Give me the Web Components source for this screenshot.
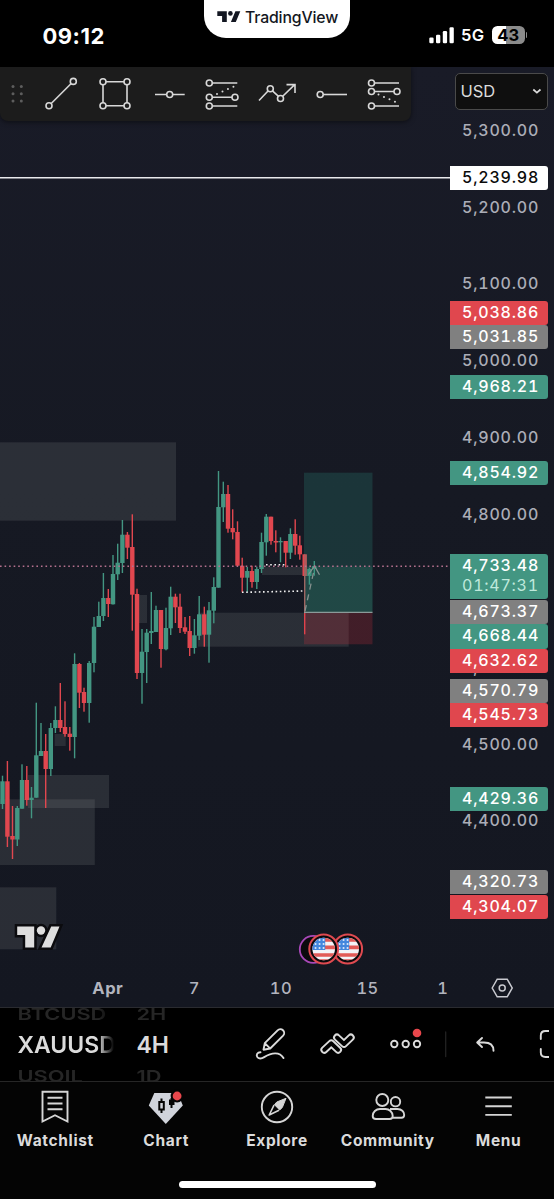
<!DOCTYPE html>
<html lang="en">
<head>
<meta charset="utf-8">
<title>XAUUSD 4H</title>
<style>
  html, body {
    margin: 0;
    background: #000;
  }
  body {
    width: 554px;
    height: 1199px;
    overflow: hidden;
    font-family: Inter, "Liberation Sans", sans-serif;
    color: #dbdbdb;
  }
</style>
</head>
<body>
<trading-app></trading-app>

<script>
function define(name, html, setup) {
  const template = document.createElement('template');
  template.innerHTML = html;
  window.customElements.define(name, class extends HTMLElement {
    constructor() {
      super();
      this.attachShadow({ mode: 'open' });
      this.shadowRoot.appendChild(template.content.cloneNode(true));
    }

    connectedCallback() {
      if (setup) setup(this, this.shadowRoot);
    }
  });
}

define('status-bar', `
<style>
:host {
  display: grid;
  grid-template-columns: 204px 146px 1fr;
  height: 67px;
  background: #000;
  color: #fff;
}
.time {
  padding: 21.5px 0 0 42.5px;
  font-size: 22px;
  font-weight: 700;
  line-height: 28px;
  letter-spacing: .5px;
}
.brand {
  display: flex;
  align-items: center;
  box-sizing: border-box;
  height: 38px;
  padding: 0 0 4px 12px;
  gap: 4px;
  border-radius: 0 0 22px 22px;
  background: #fff;
  color: #131722;
  font-size: 15.8px;
  font-weight: 500;
  letter-spacing: -.15px;
}
.right {
  display: flex;
  align-items: center;
  height: 18px;
  padding: 26px 0 0 79px;
}
.net {
  width: 31px;
  padding-left: 7px;
  font-size: 16.5px;
  font-weight: 600;
  letter-spacing: .4px;
}
.battery {
  width: 32.5px;
  height: 18px;
  border-radius: 5.5px;
  background: linear-gradient(90deg, #fff 14px, #8b8b8b 14px);
  color: #000;
  font-size: 16.5px;
  font-weight: 700;
  line-height: 18px;
  text-align: center;
}
.nub {
  width: 1.5px;
  height: 6px;
  margin-left: 1px;
  border-radius: 0 2px 2px 0;
  background: #8b8b8b;
}
</style>
<div class="time">09:12</div>
<div class="brand">
  <svg width="25" height="14" viewBox="216 11 25 14" fill="#131722">
    <path d="M217.3 12.2h9.5V23h-4.7v-6h-4.8zM235.4 12.2h4.9L235.8 23h-4.9z"/>
    <circle cx="230.4" cy="14.4" r="2.3"/>
  </svg>
  <span>TradingView</span>
</div>
<div class="right">
  <svg width="25" height="18" viewBox="429 26 25 18" fill="#fff">
    <rect x="429.3" y="37.5" width="4.3" height="5.7" rx="1.2"/>
    <rect x="436" y="34.7" width="4.3" height="8.5" rx="1.2"/>
    <rect x="442.8" y="31" width="4.3" height="12.2" rx="1.2"/>
    <rect x="449.5" y="27.2" width="4.3" height="16" rx="1.2"/>
  </svg>
  <span class="net">5G</span>
  <span class="battery">43</span>
  <span class="nub"></span>
</div>
`);

// every tool owns a 54px cell, drawn in the bar's own coordinates
const TOOLS = [
  '<path d="M51.2 103.5L71.2 83.5"/><circle cx="73.3" cy="81.4" r="3"/><circle cx="49" cy="105.7" r="3"/>',
  '<path d="M106 81.7h18M106 105.7h18M103 84.7v18M127 84.7v18"/><circle cx="103" cy="81.7" r="3"/><circle cx="127" cy="81.7" r="3"/><circle cx="103" cy="105.7" r="3"/><circle cx="127" cy="105.7" r="3"/>',
  '<path d="M155 94.5h11.7M172.7 94.5h12"/><circle cx="169.7" cy="94.5" r="3"/>',
  '<path d="M212.3 83h25M212.3 97.3h19.7M212.3 106h25"/><path class="dots" d="M217 94l19-8.5"/><circle cx="209.3" cy="83" r="3"/><circle cx="209.3" cy="97.3" r="3"/><circle cx="235" cy="97.3" r="3"/><circle cx="209.3" cy="106" r="3"/>',
  '<path d="M259 100.5l9-9.5M272.5 90.8l6 5.5M282.7 96.3l12-11.7M286.5 84.6h8.5v8.4"/><circle cx="270.3" cy="88.8" r="3"/><circle cx="280.5" cy="98.5" r="3"/>',
  '<path d="M323.2 94.5H347"/><circle cx="320.2" cy="94.5" r="3"/>',
  '<path d="M374.5 83H399M374.5 91.5H394M374.5 106H399"/><path class="dots" d="M378.5 94.5l20 8.8"/><circle cx="371.5" cy="83" r="3"/><circle cx="371.5" cy="91.5" r="3"/><circle cx="397" cy="91.5" r="3"/><circle cx="371.5" cy="106" r="3"/>',
];

define('drawing-toolbar', `
<style>
:host {
  display: flex;
  width: 411px;
  height: 54px;
  border-radius: 0 0 8px 8px;
  background: #1c1c1c;
  box-shadow: 0 1px 5px rgba(0, 0, 0, .5);
}
svg {
  flex: none;
  fill: none;
  stroke: #d8d8d8;
  stroke-width: 1.6;
}
.grip {
  fill: #5d5d5d;
  stroke: none;
}
.dots {
  stroke-dasharray: 0 6;
  stroke-linecap: round;
  stroke-width: 2;
}
</style>
<svg class="grip" width="34" height="54" viewBox="0 67 34 54">
  <circle cx="13" cy="86.5" r="1.5"/><circle cx="21.3" cy="86.5" r="1.5"/>
  <circle cx="13" cy="93.7" r="1.5"/><circle cx="21.3" cy="93.7" r="1.5"/>
  <circle cx="13" cy="101" r="1.5"/><circle cx="21.3" cy="101" r="1.5"/>
</svg>
`, (host, root) => {
  TOOLS.forEach((shape, i) => {
    root.innerHTML += `<svg width="54" height="54" viewBox="${34 + i * 54} 67 54 54">${shape}</svg>`;
  });
});

define('currency-select', `
<style>
:host {
  display: flex;
  align-items: center;
  justify-content: space-between;
  box-sizing: border-box;
  width: 93px;
  height: 37px;
  padding: 0 5px 0 4.5px;
  border: 1.5px solid #4a4a4a;
  border-radius: 5px;
  background: #0f0f0f;
  font-size: 16.5px;
}
</style>
<slot></slot>
<svg width="10" height="8" viewBox="0 0 10 8" fill="none" stroke="#dbdbdb" stroke-width="1.7"><path d="M1.3 2.5l3.6 3.2 3.6-3.2"/></svg>
`);

const UP = '#439682';
const DOWN = '#e1474f';

// x, high, body top, body bottom, low, rising
const CANDLES = [
  [2.5, 775.7, 781.3, 804, 809, 1],
  [7.4, 761, 781.3, 836.7, 847, 0],
  [12.5, 806, 836, 839.5, 859, 0],
  [17.3, 806, 808, 839.5, 846, 1],
  [22, 764.3, 780, 808.7, 808.7, 1],
  [26.8, 766, 780, 800, 805.7, 0],
  [31.5, 787, 797.7, 800, 818.3, 1],
  [36.3, 702.7, 755.3, 797.7, 797.7, 1],
  [41, 723, 751, 756, 756, 1],
  [45.7, 734, 751, 769, 808, 0],
  [50.8, 723, 728, 769, 776, 1],
  [55.4, 706.3, 720, 728, 733, 1],
  [60.3, 683, 720, 728, 732, 0],
  [65, 701.3, 727, 734, 736.7, 0],
  [69.8, 727, 733.7, 737, 750.7, 0],
  [74.6, 653.3, 664, 737, 758.3, 1],
  [79.4, 663, 664, 692.7, 708, 0],
  [84, 687.7, 692, 703, 711.7, 0],
  [89.2, 661, 663, 703, 722.7, 1],
  [94, 617, 626.7, 663, 672.3, 1],
  [98.8, 601.7, 616, 627, 627, 1],
  [103.4, 573, 598, 616, 621, 1],
  [108.3, 589, 598, 604, 617, 0],
  [113, 555, 574, 604.3, 604.5, 1],
  [117.7, 543.7, 562.7, 574.3, 580, 1],
  [122.4, 520, 534.7, 563, 573, 1],
  [127.4, 532, 534.7, 547.7, 559, 0],
  [132.3, 514.3, 547, 594.7, 630.7, 0],
  [137, 588.7, 594, 673, 679, 0],
  [142, 629, 651.7, 673, 703.7, 1],
  [146.7, 629, 632.7, 652, 683, 1],
  [151.3, 592, 631, 633, 644, 1],
  [156, 605.7, 610, 632, 632, 1],
  [161, 610, 610, 649, 667.7, 0],
  [166, 607.7, 628, 649.3, 650.3, 1],
  [170.7, 586.7, 596.7, 628.3, 635, 1],
  [175.4, 593.7, 596.7, 607.3, 623, 0],
  [180, 593.7, 606.7, 628, 633, 0],
  [185, 617, 627.3, 631.7, 634, 0],
  [189.7, 616, 631, 648, 656, 0],
  [194.4, 619, 635.3, 648, 653.7, 1],
  [199.2, 596, 614.3, 635.7, 640, 1],
  [204.3, 606.7, 614.3, 634.7, 646.7, 0],
  [209, 602, 610.3, 634.7, 662.7, 1],
  [213.8, 577.3, 587, 610.7, 623.3, 1],
  [218.5, 471, 507, 587.7, 587.7, 1],
  [223.3, 481.7, 494, 507.3, 522, 1],
  [228, 485, 494, 528.7, 532.7, 0],
  [232.7, 509.3, 528, 532.3, 539.3, 0],
  [237.5, 521.3, 532, 565.7, 566, 0],
  [242.2, 557.7, 565.7, 577.7, 592.3, 0],
  [247.3, 567, 571, 577.7, 592, 1],
  [252, 565.7, 571, 582, 587.7, 0],
  [256.8, 566.7, 569, 582, 589, 1],
  [261.5, 532.7, 542, 569, 573, 1],
  [266.3, 514, 516.7, 542.3, 555.7, 1],
  [271, 516.7, 516.7, 541, 544.7, 0],
  [275.8, 530.3, 541, 542.5, 552.3, 0],
  [280.5, 537.3, 541, 542.3, 562.3, 1],
  [285.7, 541, 541, 552.7, 567.3, 0],
  [290.4, 528.3, 534, 552.7, 559, 1],
  [295.2, 519.3, 534, 545.7, 554.7, 0],
  [299.8, 535.7, 545.3, 554.3, 559.7, 0],
  [304.7, 554.3, 554.3, 576, 634.3, 0],
  [309.4, 567.7, 569, 576, 584.7, 1],
  [314.3, 561, 566, 569, 575.7, 1],
];

// x1, y1, x2, y2
const ZONES = [
  [0, 442.3, 176, 520.7],
  [139, 595, 147, 623],
  [54.7, 734, 65.7, 746],
  [28, 775, 109, 808],
  [0, 799.3, 94.8, 865],
  [0, 887.3, 56.3, 949.3],
  [262, 567, 304, 575],
  [198, 612.7, 348.7, 646.7],
];

const flag = (cx) => `
  <circle cx="${cx}" cy="949" r="14.4" fill="#0c0a0d" stroke="#df4a50" stroke-width="2"/>
  <g clip-path="url(#c${cx})">
    <rect x="${cx - 12}" y="937" width="24" height="25" fill="#f3f3f7"/>
    <path d="M${cx - 12} 939.8h24M${cx - 12} 947.4h24M${cx - 12} 955h24M${cx - 12} 961h24" stroke="#e25a57" stroke-width="3.7"/>
    <rect x="${cx - 12}" y="937" width="13.5" height="13" fill="#4387dd"/>
    <path d="M${cx - 9} 940h11M${cx - 9} 944h11M${cx - 9} 948h11" stroke="#fff" stroke-width="1.7" stroke-dasharray="1.7 2.3"/>
  </g>
  <clipPath id="c${cx}"><circle cx="${cx}" cy="949" r="11.3"/></clipPath>`;

define('candle-chart', `
<style>
:host {
  display: block;
  overflow: hidden;
}
svg {
  display: block;
}
</style>
<svg width="450" height="903" viewBox="0 67 450 903">
  <g class="zones" fill="rgba(132, 134, 134, .2)"></g>
  <path d="M0 177.8H450" stroke="#e9e9ec" stroke-width="1.5"/>
  <g class="candles"></g>
  <rect x="304" y="472.7" width="68.5" height="139.6" fill="rgba(42, 140, 122, .25)"/>
  <rect x="304" y="566.5" width="68.5" height="45.8" fill="rgba(60, 160, 135, .18)"/>
  <rect x="304" y="612.3" width="68.5" height="32" fill="rgba(225, 50, 65, .22)"/>
  <path d="M304 612.3h68.5" stroke="#8b9a99" stroke-width="1.2"/>
  <path d="M305 611L314.5 568" stroke="#86918f" stroke-width="1.3" stroke-dasharray="6 5" fill="none"/>
  <path d="M308.5 574.5l6-8.5 5 8.800" stroke="#86918f" stroke-width="1.3" fill="none"/>
  <path d="M0 566.3H450" stroke="#b5718e" stroke-width="1.6" stroke-dasharray="1.6 2.95"/>
  <path d="M242 592.3L304 591M266 564.8h19" stroke="#f0f0f0" stroke-width="1.6" stroke-dasharray="1.6 2.6"/>
  <g stroke="#0b0b0e" stroke-width="5" stroke-linejoin="miter">
    <path d="M17.2 926.5h17v21h-9v-12.5h-8zM51.2 926.5h8.3l-8.8 21h-9.2z"/>
    <circle cx="41" cy="930.5" r="4.2"/>
  </g>
  <g fill="#dedede">
    <path d="M17.2 926.5h17v21h-9v-12.5h-8zM51.2 926.5h8.3l-8.8 21h-9.2z"/>
    <circle cx="41" cy="930.5" r="4.2"/>
  </g>
  <circle cx="313.3" cy="949.4" r="13.5" fill="#0c0a0d" stroke="#a848b8" stroke-width="1.8"/>
  ${flag(347.7)}
  ${flag(323.7)}
</svg>
`, (host, root) => {
  root.querySelector('.zones').innerHTML = ZONES.map(([x1, y1, x2, y2]) =>
    `<rect x="${x1}" y="${y1}" width="${x2 - x1}" height="${y2 - y1}"/>`
  ).join('');
  root.querySelector('.candles').innerHTML = CANDLES.map(([x, high, top, bottom, low, up]) => {
    const color = up ? UP : DOWN;
    return `<rect x="${x - .7}" y="${high}" width="1.4" height="${low - high}" fill="${color}"/>` +
      `<rect x="${x - 2.2}" y="${top}" width="4.4" height="${bottom - top}" fill="${color}"/>`;
  }).join('');
});

define('price-tag', `
<style>
:host {
  position: absolute;
  left: 0;
  box-sizing: border-box;
  width: 98px;
  height: 24.2px;
  padding-left: 12px;
  border-radius: 0 3px 3px 0;
  font-size: 16px;
  font-weight: 500;
  font-variant-numeric: tabular-nums;
  line-height: 23px;
  letter-spacing: .8px;
  white-space: nowrap;
  color: #fff;
}
:host([kind=tick]) { color: #abadb7; }
:host([kind=white]) { background: #fff; color: #0b0b0b; }
:host([kind=red]) { background: #e0474e; }
:host([kind=gray]) { background: #808080; }
:host([kind=green]) { background: #439682; }
:host([tall]) { height: 44.4px; line-height: 20px; padding-top: 1px; }
::slotted(div) { color: #bfe9dc; font-weight: 400; letter-spacing: .75px; }
</style>
<slot></slot>
`);

const TICKS = [5300, 5200, 5100, 5000, 4900, 4800, 4700, 4600, 4500, 4400];
const TAGS = [
  ['white', '5,239.98', 165.7],
  ['red', '5,038.86', 301],
  ['gray', '5,031.85', 325.2],
  ['green', '4,968.21', 374.5],
  ['green', '4,854.92', 461],
  ['gray', '4,673.37', 600.2],
  ['green', '4,668.44', 624.4],
  ['red', '4,632.62', 648.6],
  ['gray', '4,570.79', 679],
  ['red', '4,545.73', 703.2],
  ['green', '4,429.36', 787],
  ['gray', '4,320.73', 870.3],
  ['red', '4,304.07', 894.5],
];

define('price-scale', `
<style>
:host {
  display: block;
  position: relative;
  overflow: hidden;
}
</style>
`, (host, root) => {
  const tag = (kind, text, top, attr = '') =>
    `<price-tag kind="${kind}" ${attr} style="top:${top - 67}px">${text}</price-tag>`;
  root.innerHTML +=
    TICKS.map((p, i) => tag('tick', p.toLocaleString('en-US') + '.00', 119 + i * 76.7)).join('') +
    TAGS.map(([kind, text, top]) => tag(kind, text, top)).join('') +
    tag('green', '4,733.48<div>01:47:31</div>', 554.4, 'tall');
});

define('time-scale', `
<style>
:host {
  display: flex;
  align-items: center;
  box-sizing: border-box;
  padding: 0 0 2px 64.5px;
  font-size: 16.5px;
  font-weight: 500;
  font-variant-numeric: tabular-nums;
  letter-spacing: .5px;
  color: #b2b4be;
}
span {
  width: 86.6px;
  text-align: center;
}
b { font-weight: 700; }
.last { width: 64px; }
svg { margin: 1px 0 0 14.7px; }
</style>
<span><b>Apr</b></span><span>7</span><span>10</span><span>15</span><span class="last">1</span>
<svg width="24" height="22" viewBox="490 977 24 22" fill="none" stroke="#c9cad0" stroke-width="1.5">
  <path d="M492.2 988l5-8.8h10l5 8.8-5 8.8h-10z"/><circle cx="502.2" cy="988" r="3"/>
</svg>
`);

define('chart-view', `
<style>
:host {
  display: grid;
  position: relative;
  grid-template: 903px 37px / 450px 104px;
  background: linear-gradient(#191b27, #161923 45%, #141721);
}
time-scale { grid-column: 1 / 3; }
.overlay {
  display: flex;
  justify-content: space-between;
  position: absolute;
  inset: 0 6px auto 0;
}
currency-select { margin-top: 5.5px; }
</style>
<candle-chart></candle-chart>
<price-scale></price-scale>
<time-scale></time-scale>
<div class="overlay">
  <drawing-toolbar></drawing-toolbar>
  <currency-select>USD</currency-select>
</div>
`);

// three rows of a wheel, outer ones tilted away
define('wheel-picker', `
<style>
:host {
  display: flex;
  flex-direction: column;
  justify-content: center;
  height: 74px;
  overflow: hidden;
  white-space: nowrap;
}
::slotted(*) {
  flex: none;
  height: 31px;
  font-size: 21.8px;
  font-weight: 600;
  line-height: 31px;
  color: #262626;
  transform: scaleY(.76);
}
::slotted(.on) {
  font-size: 23px;
  color: #dbdbdb;
  transform: none;
}
</style>
<slot></slot>
`);

define('symbol-bar', `
<style>
:host {
  display: flex;
  height: 73px;
  border-top: 1px solid #2a2b30;
  background: #000;
}
.symbol {
  width: 96px;
  margin-left: 17.5px;
  -webkit-mask-image: linear-gradient(90deg, #000 80px, transparent 96px);
  mask-image: linear-gradient(90deg, #000 80px, transparent 96px);
}
.interval {
  width: 60px;
  margin-left: 23px;
}
svg {
  margin-left: 43.5px;
  fill: none;
  stroke: #dbdbdb;
  stroke-width: 1.9;
  stroke-linecap: round;
  stroke-linejoin: round;
}
</style>
<wheel-picker class="symbol"><div>BTCUSD</div><div class="on">XAUUSD</div><div>USOIL</div></wheel-picker>
<wheel-picker class="interval"><div>2H</div><div class="on">4H</div><div>1D</div></wheel-picker>
<svg width="309" height="73" viewBox="240 1008 309 73">
  <path d="M263.5 1049.7l1.3-6.5 12.8-12.8a3.7 3.7 0 0 1 5.5 5.3l-12.9 12.8zM264.8 1043.2l5.2 5.2"/>
  <path d="M260.5 1052.3c-3.2.2-4.5 2.3-3.3 4.6 1.3 2.3 4.5 1.8 7 .2 7.5-4.7 15.500-5.500 19.3 1"/>
  <path stroke-width="7.8" d="M324.3 1049.8l7-6.5 6.8 6.5M337 1037.5l7 6.5 6.8-6.5"/>
  <path stroke="#000" stroke-width="3.9" d="M324.3 1049.8l7-6.5 6.8 6.5M337 1037.5l7 6.5 6.8-6.5"/>
  <circle cx="394.3" cy="1044" r="3.2"/><circle cx="405.7" cy="1044" r="3.2"/><circle cx="417" cy="1044" r="3.2"/>
  <circle cx="417" cy="1033" r="4.3" fill="#e8474c" stroke="none"/>
  <path d="M445.7 1032v24.5" stroke="#222" stroke-width="1.3"/>
  <path d="M482 1038l-4.8 4.5 4.8 4.5M477.5 1042.5h6.5c6 0 9.5 3 9.5 8.2"/>
  <path d="M549 1031h-3.5q-4.7 0-4.7 4.5v3.5M540.8 1049v3.5q0 4.5 4.7 4.5h3.5"/>
</svg>
`);

define('nav-item', `
<style>
:host {
  display: flex;
  flex: 1;
  flex-direction: column;
  align-items: center;
  padding-top: 5px;
  font-size: 15.5px;
  font-weight: 650;
  letter-spacing: .65px;
  line-height: 21px;
}
::slotted(svg) {
  margin-bottom: 4.5px;
  fill: none;
  stroke: #d5d5d5;
  stroke-width: 1.9;
}
</style>
<slot></slot>
`);

define('nav-bar', `
<style>
:host {
  display: block;
  height: 117px;
  border-top: 1px solid #262626;
  background: #040404;
}
nav {
  display: flex;
  height: 98.5px;
}
nav-item { width: 0; }
.home {
  width: 197px;
  height: 7.5px;
  margin: 0 auto;
  border-radius: 4px;
  background: #fff;
}
</style>
<nav>
  <nav-item>
    <svg width="44" height="38" viewBox="33.5 1087 44 38"><path d="M43 1091.7h25v29.8l-12.5-6.3-12.5 6.3zM48 1097.7h15M48 1103.5h15M48 1109.3h15"/></svg>
    Watchlist
  </nav-item>
  <nav-item>
    <svg width="44" height="38" viewBox="144.2 1087 44 38">
      <path fill="#d1d4dc" stroke="none" d="M154.5 1093h23.5l5 12.5-17 18.5-17-18.5z"/>
      <circle cx="177.3" cy="1096" r="6.5" fill="#040404" stroke="none"/>
      <path stroke="#040404" stroke-width="2" d="M159.5 1102h4.5v7.5h-4.5zM161.7 1098.5v3.5M161.7 1109.5v3.5M171.7 1098v10"/>
      <path fill="#040404" stroke="none" d="M169.2 1099.5h5.5v5.5h-5.5z"/>
      <circle cx="177.3" cy="1096" r="4.4" fill="#e8474c" stroke="none"/>
    </svg>
    Chart
  </nav-item>
  <nav-item>
    <svg width="44" height="38" viewBox="255 1087 44 38">
      <circle cx="277" cy="1107" r="15.2"/>
      <path fill="#d5d5d5" stroke-width="1" stroke-linejoin="round" d="M286 1098.3l-3.7 9.2-2.6 2.5-5.3-5.3 2.4-2.7z"/>
      <path stroke-linejoin="round" stroke-width="1.6" d="M274 1105.2l-4.8 9.8 9.8-4.8"/>
    </svg>
    Explore
  </nav-item>
  <nav-item>
    <svg width="44" height="38" viewBox="366 1087 44 38">
      <circle cx="382.3" cy="1100" r="6"/><circle cx="395.5" cy="1101.7" r="4.7"/>
      <path d="M376 1119h13.5q3.2 0 3.2-3c0-4.2-3.5-7-7.2-7h-5.5c-4 0-7.3 3-7.3 7q0 3 3.3 3z"/>
      <path d="M390 1109h7.5c4 0 6.7 2.7 6.7 6q0 2.7-2.7 2.7h-8.5"/>
    </svg>
    Community
  </nav-item>
  <nav-item>
    <svg width="44" height="38" viewBox="477 1087 44 38"><path d="M485.3 1097.5h26.5M485.3 1106.2h26.5M485.3 1114.9h26.5"/></svg>
    Menu
  </nav-item>
</nav>
<div class="home"></div>
`);

define('trading-app', `
<style>
:host {
  display: flex;
  flex-direction: column;
  height: 1199px;
}
</style>
<status-bar></status-bar>
<chart-view></chart-view>
<symbol-bar></symbol-bar>
<nav-bar></nav-bar>
`);
</script>
</body>
</html>
